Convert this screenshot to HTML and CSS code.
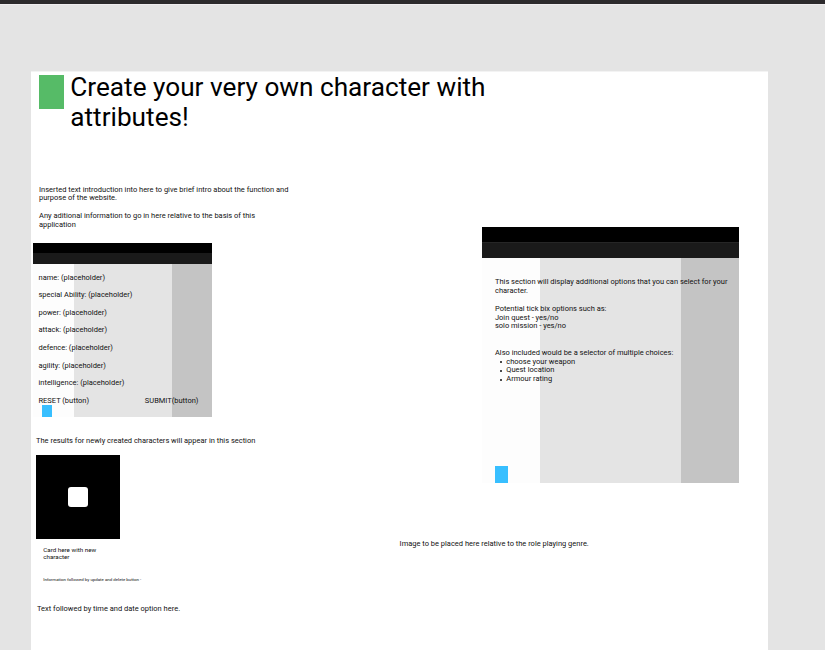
FILE: index.html
```html
<!DOCTYPE html>
<html lang="en">
<head>
<meta charset="utf-8">
<title>Character creator wireframe</title>
<link rel="stylesheet" href="styles.css">
</head>
<body>
<div class="toolbar"></div>
<main class="artboard">
  <header class="header">
    <div class="logo"></div>
    <h1>Create your very own character with<br>attributes!</h1>
  </header>
  <div class="columns">
    <section class="left">
      <p class="intro">Inserted text introduction into here to give brief intro about the function and<br>purpose of the website.</p>
      <p class="about">Any aditional information to go in here relative to the basis of this<br>application</p>
      <div class="panel form-panel">
        <div class="bar-top"></div>
        <div class="bar-sub"></div>
        <div class="panel-body">
          <ul class="fields">
            <li>name: (placeholder)</li>
            <li>special Ability: (placeholder)</li>
            <li>power: (placeholder)</li>
            <li>attack: (placeholder)</li>
            <li>defence: (placeholder)</li>
            <li>agility: (placeholder)</li>
            <li>intelligence: (placeholder)</li>
          </ul>
          <div class="actions"><span>RESET (button)</span><span>SUBMIT(button)</span></div>
          <div class="marker"></div>
        </div>
      </div>
      <p class="results">The results for newly created characters will appear in this section</p>
      <div class="card-image"><div class="card-hole"></div></div>
      <p class="card-title">Card here with new<br>character</p>
      <p class="card-info">Information followed by update and delete button -</p>
      <p class="footer-note">Text followed by time and date option here.</p>
    </section>
    <section class="right">
      <div class="panel options-panel">
        <div class="bar-top"></div>
        <div class="bar-sub"></div>
        <div class="panel-body">
          <div class="options-text">
            <p class="lead">This section will display additional options that you can select for your<br>character.</p>
            <p>Potential tick bix options such as:<br>Join quest - yes/no<br>solo mission - yes/no</p>
            <p class="choices-title">Also included would be a selector of multiple choices:</p>
            <ul class="choices">
              <li>choose your weapon</li>
              <li>Quest location</li>
              <li>Armour rating</li>
            </ul>
          </div>
          <div class="marker"></div>
        </div>
      </div>
      <p class="image-note">Image to be placed here relative to the role playing genre.</p>
    </section>
  </div>
</main>
</body>
</html>
```
FILE: styles.css
```css
* { box-sizing: border-box; margin: 0; padding: 0; }
html, body { height: 100%; }
body {
  display: flex;
  flex-direction: column;
  overflow: hidden;
  background: #e4e4e4;
  color: #111;
  font-family: Roboto, "Liberation Sans", sans-serif;
  font-size: 7.49px;
  line-height: 8.8px;
  white-space: nowrap;
}
ul { list-style: none; }

.toolbar { flex: none; height: 5px; background: #2c2a2c; border-bottom: 1px solid #efedef; }
.artboard { flex: none; width: 737px; height: 590px; margin: 66px 0 0 31px; border-top: 1px solid #f3f3f3; background: #fff; }

.header { display: flex; height: 113.6px; padding: 3px 0 0 8px; }
.logo { width: 25px; height: 34px; background: #56bb67; }
h1 { margin: -3px 0 0 6.3px; color: #000; font-size: 26.2px; line-height: 30.4px; font-weight: 400; }

.columns { display: grid; grid-template-columns: 368.6px 1fr; }
.intro { margin-left: 8px; }
.about { margin: 9px 0 0 8px; }

.panel-body { display: flex; flex-direction: column; }
.panel .bar-top { background: #000; }
.panel .bar-sub { background: #1a1a1a; }
.marker { background: #38bfff; }

.form-panel { width: 179.4px; margin: 13.2px 0 0 2px; }
.form-panel .bar-top { height: 10px; }
.form-panel .bar-sub { height: 11px; }
.form-panel .panel-body {
  height: 153px;
  padding: 9.8px 0 0 5.5px;
  background: linear-gradient(90deg, #fdfdfd 41px, #e4e4e4 41px 138.5px, #c4c4c4 138.5px);
}
.fields li { height: 17.55px; }
.actions { display: flex; }
.actions span:last-child { margin-left: 55.8px; }
.form-panel .marker { width: 10px; height: 11.5px; margin: 0 0 0 3.5px; }

.results { margin: 20.2px 0 0 5px; }
.card-image { display: grid; place-items: center; width: 84px; height: 84px; margin: 8.8px 0 0 5px; background: #000; }
.card-hole { width: 20.5px; height: 20.5px; border-radius: 3px; background: #fff; }
.card-title { margin: 8px 0 0 12.2px; font-size: 6.25px; line-height: 7.2px; }
.card-info { margin: 15.5px 0 0 12.2px; font-size: 4.38px; line-height: 5px; }
.footer-note { margin: 23.6px 0 0 6px; }

.options-panel { width: 257.2px; margin: 41.7px 0 0 82.2px; }
.options-panel .bar-top { height: 16px; border-bottom: 1px solid #262626; }
.options-panel .bar-sub { height: 15px; }
.options-panel .panel-body {
  height: 225px;
  padding: 20.2px 0 0 13.2px;
  background: linear-gradient(90deg, #fdfdfd 58.5px, #e4e4e4 58.5px 199px, #c4c4c4 199px);
}
.options-panel .marker { width: 13px; height: 17.5px; margin-top: auto; }
.lead { margin-bottom: 8.8px; }
.choices-title { margin-top: 17.6px; }
.choices li { display: flex; align-items: center; }
.choices li::before { content: ""; width: 2px; height: 2px; margin: 0 4.3px 0 5px; border-radius: 50%; background: #111; }
.image-note { margin-top: 56.7px; }
```
